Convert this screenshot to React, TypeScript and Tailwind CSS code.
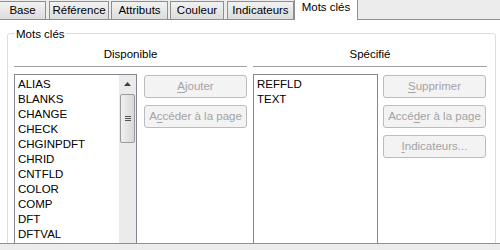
import React from 'react';

const tabs = [
  { label: 'Base', cls: 'w-[46px] border-l-0' },
  { label: 'Référence', cls: 'w-[60px] ml-[3px]' },
  { label: 'Attributs', cls: 'w-[57px] ml-[2px]' },
  { label: 'Couleur', cls: 'w-[54px] ml-[2px]' },
  { label: 'Indicateurs', cls: 'w-[67px] ml-[3px]' },
];

const available = [
  'ALIAS',
  'BLANKS',
  'CHANGE',
  'CHECK',
  'CHGINPDFT',
  'CHRID',
  'CNTFLD',
  'COLOR',
  'COMP',
  'DFT',
  'DFTVAL',
];

const specified = ['REFFLD', 'TEXT'];

// disabled push button with one mnemonic letter underlined
const Btn = ({ pre, key_, post }: { pre: string; key_: string; post: string }) => (
  <div className="h-[23px] w-[103px] rounded-[3px] border border-[#b9bcc0] bg-[#f3f3f3] flex items-center justify-center text-[#a3a3a3] whitespace-nowrap">
    {pre}
    <span className="underline underline-offset-2">{key_}</span>
    {post}
  </div>
);

export default function App() {
  return (
    <div
      className="w-[500px] h-[250px] flex flex-col bg-[#ececec] text-[11.5px] text-black overflow-hidden"
      style={{ fontFamily: '"Liberation Sans", Arial, sans-serif' }}
    >
      {/* tab strip */}
      <div className="h-[20px] flex items-end border-b border-[#8e8f8f] relative z-10">
        {tabs.map((t) => (
          <div
            key={t.label}
            className={`h-[18px] flex items-center justify-center border border-b-0 border-[#8e8f8f] bg-gradient-to-b from-[#f2f2f2] to-[#dcdcdc] leading-none ${t.cls}`}
          >
            {t.label}
          </div>
        ))}
        <div className="w-[64px] h-[21px] -mb-px pb-[4px] flex items-center justify-center border border-b-0 border-[#8e8f8f] bg-white leading-none">
          Mots clés
        </div>
      </div>

      {/* page */}
      <div className="h-[224px] bg-white border-b border-[#8e8f8f] pl-[7px] pr-[4px] pt-[13px] overflow-hidden">
        <div className="h-[240px] border border-[#d5dfe5] rounded-[3px] relative px-[6px] pt-[12px]">
          <span className="absolute -top-[8px] left-[7px] bg-white px-[1px] leading-[16px]">Mots clés</span>

          <div className="flex gap-[6px]">
            {/* left column */}
            <div className="w-[233px]">
              <div className="text-center leading-[16px] pb-[4px] border-b border-[#a0a0a0]">Disponible</div>
              <div className="flex gap-[7px] mt-[7px]">
                <div className="w-[123px] h-[170px] border border-[#828790] flex">
                  <div className="flex-1 pl-[3px] pt-[2px] leading-[15px]">
                    {available.map((a) => (
                      <div key={a}>{a}</div>
                    ))}
                  </div>
                  <div className="w-[17px] bg-[#ebebeb] flex flex-col items-center">
                    <div className="h-[17px] flex items-center justify-center">
                      <svg width="7" height="4" viewBox="0 0 7 4">
                        <path d="M0 4 L3.5 0 L7 4 Z" fill="#404040" />
                      </svg>
                    </div>
                    <div className="mt-[2px] w-[15px] h-[49px] rounded-[2px] border border-[#9a9a9a] bg-gradient-to-r from-[#f0f0f0] to-[#d8d8d8] flex flex-col items-center justify-center gap-[1px]">
                      <div className="w-[6px] h-px bg-[#555]" />
                      <div className="w-[6px] h-px bg-[#555]" />
                      <div className="w-[6px] h-px bg-[#555]" />
                    </div>
                  </div>
                </div>
                <div className="flex flex-col gap-[7px] pt-[1px]">
                  <Btn pre="" key_="A" post="jouter" />
                  <Btn pre="A" key_="c" post="céder à la page" />
                </div>
              </div>
            </div>

            {/* right column */}
            <div className="w-[234px]">
              <div className="text-center leading-[16px] pb-[4px] border-b border-[#a0a0a0]">Spécifié</div>
              <div className="flex gap-[5px] mt-[7px]">
                <div className="w-[125px] h-[170px] border border-[#828790] pl-[3px] pt-[2px] leading-[15px]">
                  {specified.map((s) => (
                    <div key={s}>{s}</div>
                  ))}
                </div>
                <div className="flex flex-col gap-[7px] pt-[1px]">
                  <Btn pre="" key_="S" post="upprimer" />
                  <Btn pre="Accé" key_="d" post="er à la page" />
                  <Btn pre="" key_="I" post="ndicateurs..." />
                </div>
              </div>
            </div>
          </div>
        </div>
      </div>
    </div>
  );
}
